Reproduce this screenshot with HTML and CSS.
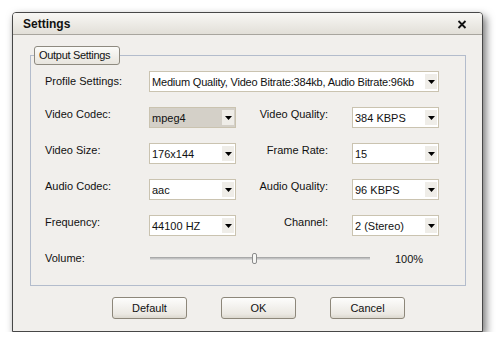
FILE: index.html
```html
<!DOCTYPE html>
<html lang="en">
<head>
    <meta charset="UTF-8">
    <title>Settings</title>
    <link rel="stylesheet" href="styles.css">
</head>
<body>
    <div class="window">
        <div class="titlebar">
            <span class="title">Settings</span>
            <svg class="close" width="10" height="9" viewBox="0 0 10 9">
                <path d="M1.5 1 L8.5 8 M8.5 1 L1.5 8" stroke="#111" stroke-width="1.8" fill="none"/>
            </svg>
        </div>
        <div class="content">
            <div class="group">
                <div class="group-tab">Output Settings</div>
                <div class="form">
                    <label class="lbl lbl-mid">Profile Settings:</label>
                    <div class="combo wide">
                        <span class="value tight">Medium Quality, Video Bitrate:384kb, Audio Bitrate:96kb</span>
                        <span class="arrow"><svg width="7" height="4" viewBox="0 0 7 4"><polygon points="0,0 7,0 3.5,4" fill="#000"/></svg></span>
                    </div>

                    <label class="lbl">Video Codec:</label>
                    <div class="combo disabled">
                        <span class="value">mpeg4</span>
                        <span class="arrow"><svg width="7" height="4" viewBox="0 0 7 4"><polygon points="0,0 7,0 3.5,4" fill="#000"/></svg></span>
                    </div>
                    <label class="lbl right">Video Quality:</label>
                    <div class="combo col5">
                        <span class="value">384 KBPS</span>
                        <span class="arrow"><svg width="7" height="4" viewBox="0 0 7 4"><polygon points="0,0 7,0 3.5,4" fill="#000"/></svg></span>
                    </div>

                    <label class="lbl">Video Size:</label>
                    <div class="combo">
                        <span class="value">176x144</span>
                        <span class="arrow"><svg width="7" height="4" viewBox="0 0 7 4"><polygon points="0,0 7,0 3.5,4" fill="#000"/></svg></span>
                    </div>
                    <label class="lbl right">Frame Rate:</label>
                    <div class="combo col5">
                        <span class="value">15</span>
                        <span class="arrow"><svg width="7" height="4" viewBox="0 0 7 4"><polygon points="0,0 7,0 3.5,4" fill="#000"/></svg></span>
                    </div>

                    <label class="lbl">Audio Codec:</label>
                    <div class="combo">
                        <span class="value">aac</span>
                        <span class="arrow"><svg width="7" height="4" viewBox="0 0 7 4"><polygon points="0,0 7,0 3.5,4" fill="#000"/></svg></span>
                    </div>
                    <label class="lbl right">Audio Quality:</label>
                    <div class="combo col5">
                        <span class="value">96 KBPS</span>
                        <span class="arrow"><svg width="7" height="4" viewBox="0 0 7 4"><polygon points="0,0 7,0 3.5,4" fill="#000"/></svg></span>
                    </div>

                    <label class="lbl">Frequency:</label>
                    <div class="combo">
                        <span class="value">44100 HZ</span>
                        <span class="arrow"><svg width="7" height="4" viewBox="0 0 7 4"><polygon points="0,0 7,0 3.5,4" fill="#000"/></svg></span>
                    </div>
                    <label class="lbl right">Channel:</label>
                    <div class="combo col5">
                        <span class="value">2 (Stereo)</span>
                        <span class="arrow"><svg width="7" height="4" viewBox="0 0 7 4"><polygon points="0,0 7,0 3.5,4" fill="#000"/></svg></span>
                    </div>

                    <label class="lbl lbl-mid">Volume:</label>
                    <div class="volume">
                        <div class="track"><span class="thumb"></span></div>
                        <span class="percent">100%</span>
                    </div>
                </div>
            </div>
            <div class="buttons">
                <button>Default</button>
                <button>OK</button>
                <button>Cancel</button>
            </div>
        </div>
    </div>
</body>
</html>
```

FILE: styles.css
```css
body {
    margin: 0;
    background: #fff;
    font-family: 'Liberation Sans', Arial, sans-serif;
    font-size: 11px;
    color: #111;
}
.window {
    box-sizing: border-box;
    margin: 12px 0 0 12px;
    width: 471px;
    height: 320px;
    border: 1px solid #474747;
    border-radius: 4px 4px 0 0;
    background: #f1efec;
    box-shadow: 3px 4px 9px rgba(0, 0, 0, 0.55);
}
.titlebar {
    height: 21px;
    border-bottom: 1px solid #a8a59e;
    border-radius: 3px 3px 0 0;
    background: linear-gradient(to bottom, #f8f7f4, #e2dfd8);
    display: flex;
    align-items: center;
    justify-content: space-between;
    padding: 0 15px 0 10px;
}
.title {
    font-size: 12px;
    font-weight: bold;
    color: #111;
}
.close {
    display: block;
    margin-top: 1px;
}
.content {
    padding: 20px 17px 0 17px;
}
.group {
    position: relative;
    box-sizing: border-box;
    width: 436px;
    height: 231px;
    border: 1px solid #b3bccc;
    padding: 15px 0 0 14px;
}
.group-tab {
    position: absolute;
    left: 3px;
    top: -10px;
    box-sizing: border-box;
    width: 86px;
    height: 19px;
    line-height: 17px;
    padding-left: 4px;
    border: 1px solid #8e8a80;
    border-radius: 3px;
    background: linear-gradient(to bottom, #fbfbf9, #e8e5de);
    white-space: nowrap;
    letter-spacing: -0.3px;
}
.form {
    display: grid;
    grid-template-columns: 104px 87px 92px 24px 87px;
    grid-template-rows: repeat(5, 21px) 15px;
    row-gap: 15px;
}
.lbl {
    grid-column: 1;
    align-self: start;
    padding-top: 1px;
    line-height: 13px;
    white-space: nowrap;
}
.lbl-mid {
    align-self: center;
    padding-top: 0;
}
.lbl.right {
    grid-column: 3;
    text-align: right;
}
.combo {
    grid-column: 2;
    box-sizing: border-box;
    height: 21px;
    border: 1px solid #cac3b0;
    background: #fff;
    display: flex;
    align-items: center;
    overflow: hidden;
}
.combo.wide {
    grid-column: 2 / 6;
}
.combo.col5 {
    grid-column: 5;
}
.combo.disabled {
    background: #d4d0c8;
}
.value {
    flex: 1;
    padding-left: 2px;
    white-space: nowrap;
    overflow: hidden;
}
.value.tight {
    letter-spacing: -0.2px;
}
.arrow {
    width: 12px;
    height: 15px;
    margin: 0 1px 0 2px;
    background: #efede8;
    display: flex;
    align-items: center;
    justify-content: center;
}
.arrow svg {
    display: block;
}
.volume {
    grid-column: 2 / 6;
    display: flex;
    align-items: center;
}
.track {
    position: relative;
    margin-left: 1px;
    width: 220px;
    height: 3px;
    background: linear-gradient(to bottom, #9d9d9d, #c9c9c9 60%, #e2e2e2);
}
.thumb {
    position: absolute;
    left: 102px;
    top: -4px;
    box-sizing: border-box;
    width: 5px;
    height: 11px;
    border: 1px solid #8c8c8c;
    border-radius: 2px;
    background: #f6f6f4;
}
.percent {
    margin-left: 25px;
}
.buttons {
    display: flex;
    gap: 34px;
    padding: 11px 0 0 82px;
}
button {
    box-sizing: border-box;
    width: 75px;
    height: 22px;
    font-family: 'Liberation Sans', Arial, sans-serif;
    font-size: 11px;
    color: #111;
    border: 1px solid #8d877a;
    border-radius: 3px;
    background: linear-gradient(to bottom, #fdfdfc, #ebe8e2 80%, #dcd8cf);
    padding: 0;
}
```
